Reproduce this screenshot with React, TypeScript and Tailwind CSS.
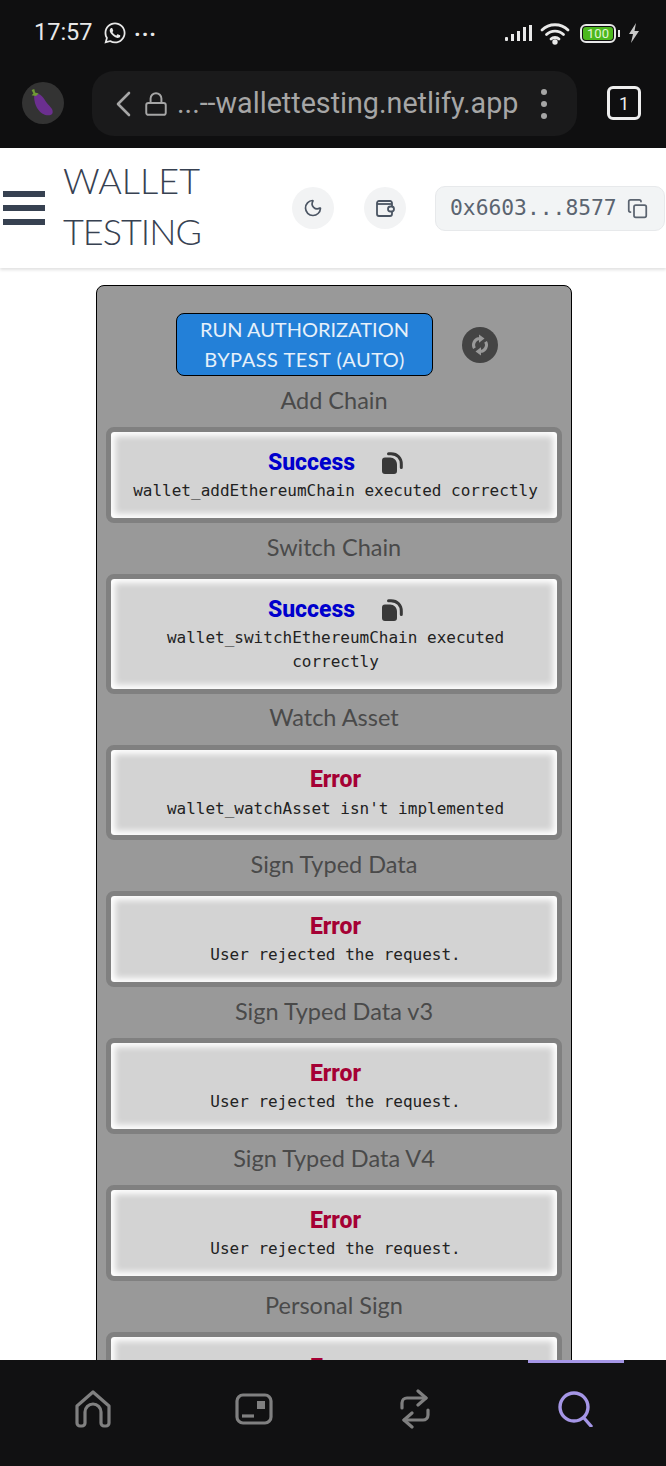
import { Copy, Lock, Moon } from "lucide-react";
import { FaWhatsapp } from "react-icons/fa";

const results = [
  { label: "Add Chain", title: "Success", message: "wallet_addEthereumChain executed correctly" },
  { label: "Switch Chain", title: "Success", message: "wallet_switchEthereumChain executed correctly" },
  { label: "Watch Asset", title: "Error", message: "wallet_watchAsset isn't implemented" },
  { label: "Sign Typed Data", title: "Error", message: "User rejected the request." },
  { label: "Sign Typed Data v3", title: "Error", message: "User rejected the request." },
  { label: "Sign Typed Data V4", title: "Error", message: "User rejected the request." },
  { label: "Personal Sign", title: "Error", message: "User rejected the request." },
];

function CopyFilled() {
  return (
    <svg viewBox="0 0 22 22" className="w-[22px] h-[22px] text-[#383838]" fill="none">
      <path
        d="M1 8.500a3 3 0 0 1 3-3h5c4 0 7 3 7 7v6.500a3 3 0 0 1-3 3H4a3 3 0 0 1-3-3z"
        fill="currentColor"
      />
      <path d="M7.500 1.700H10c6.500 0 10.300 4.500 10.300 10.300v3.500" stroke="currentColor" strokeWidth="3" strokeLinecap="round" />
    </svg>
  );
}

function RefreshIcon() {
  return (
    <svg viewBox="0 0 24 24" className="w-[24px] h-[24px] text-[#999999]" fill="currentColor">
      <path d="M6.400 15.300A6.500 6.500 0 0 1 11 5.600" fill="none" stroke="currentColor" strokeWidth="3" />
      <path d="M11 1.500 16.500 5.600 11 9.800z" />
      <path d="M17.600 8.700A6.500 6.500 0 0 1 13 18.400" fill="none" stroke="currentColor" strokeWidth="3" />
      <path d="M13 22.500 7.500 18.400 13 14.200z" />
    </svg>
  );
}

function StatusBar() {
  return (
    <div className="h-[64px] flex flex-row items-center justify-between pl-[34px] pr-[26px] pt-[2px]">
      <div className="flex flex-row items-center text-[#e8e8e8]">
        <span className="font-['Roboto',sans-serif] text-[23.5px]">17:57</span>
        <FaWhatsapp className="w-[24px] h-[24px] ml-[10px]" />
        <span className="ml-[8px] text-[20px] font-bold leading-none pb-[8px] tracking-[2px]">...</span>
      </div>
      <div className="flex flex-row items-center">
        <svg viewBox="0 0 28 18" className="w-[28px] h-[18px]" fill="#e8e8e8">
          <rect x="0" y="13" width="3" height="4" rx="1" />
          <rect x="6" y="10" width="3" height="7" />
          <rect x="12" y="7" width="3" height="10" />
          <rect x="18" y="3" width="3" height="14" />
          <rect x="24" y="1" width="3" height="16" />
        </svg>
        <svg viewBox="0 0 30 24" className="w-[30px] h-[24px] ml-[7px]" fill="none" stroke="#e8e8e8" strokeWidth="2.8" strokeLinecap="round">
          <path d="M2 9c7-7 19-7 26 0" />
          <path d="M6.500 13.500c4.500-4.500 12.500-4.500 17 0" />
          <path d="M11 18c2-2 6-2 8 0" />
          <circle cx="15" cy="21" r="1.300" fill="#e8e8e8" />
        </svg>
        <div className="flex flex-row items-center ml-[10px]">
          <div className="w-[36px] h-[19px] rounded-[6px] border-2 border-[#e8e8e8] p-[1px]">
            <div className="h-full rounded-[3px] bg-[#4cb81e] flex items-center justify-center text-[13px] leading-none text-[#e0f5d6] font-['Roboto',sans-serif]">
              100
            </div>
          </div>
          <div className="w-[2px] h-[7px] ml-[2px] bg-[#e8e8e8]" />
        </div>
        <svg viewBox="0 0 12 20" className="w-[12px] h-[20px] ml-[8px]" fill="#c8c8c8">
          <path d="M8 0 1 11h4l-2 9 8-12H6.500z" />
        </svg>
      </div>
    </div>
  );
}

function BrowserBar() {
  return (
    <div className="h-[84px] flex flex-row items-start pl-[22px] pt-[7px]">
      <div className="w-[42px] h-[42px] mt-[11px] rounded-full bg-[#333333] flex items-center justify-center shrink-0">
        <svg viewBox="0 0 32 36" className="w-[28px] h-[32px]">
          <path d="M6 8c5-2 9 1 13 8 3 5 9 8 8 13-1 4-7 4-12 1C9 26 5 17 6 8z" fill="#6b2f8f" />
          <path d="M3 3l2 4-2 2 5 1 3-3-4-1-1-4z" fill="#6f9a34" />
        </svg>
      </div>
      <div className="ml-[28px] w-[485px] h-[65px] rounded-[22px] bg-[#1a1a1b] flex flex-row items-center text-[#a6a6a6] pl-[23px]">
        <svg viewBox="0 0 16 26" className="w-[16px] h-[26px]" fill="none" stroke="currentColor" strokeWidth="2.6" strokeLinecap="round" strokeLinejoin="round">
          <path d="M14 2 3 13l11 11" />
        </svg>
        <Lock className="w-[26px] h-[26px] ml-[12px]" strokeWidth={1.8} />
        <span className="ml-[8px] font-['Roboto',sans-serif] text-[28.7px] whitespace-nowrap">...--wallettesting.netlify.app</span>
        <svg viewBox="0 0 8 32" className="w-[8px] h-[32px] ml-[22px]" fill="currentColor">
          <circle cx="4" cy="4" r="3" />
          <circle cx="4" cy="16" r="3" />
          <circle cx="4" cy="28" r="3" />
        </svg>
      </div>
      <div className="ml-[30px] mt-[15px] w-[34px] h-[34px] rounded-[6px] border-[3px] border-[#eeeeee] flex items-center justify-center text-[#eeeeee] text-[18px] font-['Roboto',sans-serif]">
        1
      </div>
    </div>
  );
}

function Header() {
  return (
    <header className="h-[120px] shrink-0 flex flex-row items-center bg-white shadow-[0_2px_3px_rgba(0,0,0,0.12)] relative pl-[3px]">
      <div className="flex flex-col gap-[8px] w-[42px]">
        <div className="h-[6px] bg-[#374151]" />
        <div className="h-[6px] bg-[#374151]" />
        <div className="h-[6px] bg-[#374151]" />
      </div>
      <div className="ml-[18px] w-[190px] pb-[4px] font-['Lato',sans-serif] font-light text-[36px] leading-[51px] text-[#374151]">
        WALLET
        <br />
        <span className="tracking-[-1px]">TESTING</span>
      </div>
      <div className="ml-[39px] w-[42px] h-[42px] rounded-full bg-[#f2f3f4] flex items-center justify-center text-[#4b5563]">
        <Moon className="w-[20px] h-[20px]" />
      </div>
      <div className="ml-[30px] w-[42px] h-[42px] rounded-full bg-[#f2f3f4] flex items-center justify-center text-[#4b5563]">
        <svg viewBox="0 0 20 20" className="w-[20px] h-[20px]" fill="none" stroke="currentColor" strokeWidth="1.800">
          <path d="M17 8V5a2 2 0 0 0-2-2H4a2 2 0 0 0-2 2v11a2 2 0 0 0 2 2h11a2 2 0 0 0 2-2v-2" />
          <path d="M2 6h15" />
          <rect x="13" y="8.500" width="6" height="5" rx="2.500" />
        </svg>
      </div>
      <div className="ml-[29px] h-[45px] w-[230px] shrink-0 rounded-[10px] bg-[#f2f4f5] border border-[#e7e9eb] flex flex-row items-center pl-[14px] text-[#5b6470]">
        <span className="font-['DejaVu_Sans_Mono',monospace] text-[21.3px]">0x6603...8577</span>
        <Copy className="w-[21px] h-[21px] ml-[10px]" />
      </div>
    </header>
  );
}

function ResultBox({ title, message }: { title: string; message: string }) {
  const success = title === "Success";
  return (
    <div className="rounded-[8px] border-[5px] border-[#808080] bg-[#d3d3d3] shadow-[inset_0_0_6px_4px_#ffffff] pt-[15px] pb-[14.8px] pl-[4px] pr-[1px] flex flex-col items-center">
      <div className="h-[32px] flex flex-row items-center gap-[26px]">
        <span className={`font-['Roboto',sans-serif] font-extrabold text-[23px] ${success ? "text-[#0000cd]" : "text-[#a50034]"}`}>
          {title}
        </span>
        {success && <CopyFilled />}
      </div>
      <p className="font-['DejaVu_Sans_Mono',monospace] text-[16px] leading-[24px] text-[#222222] text-center max-w-[420px]">
        {message}
      </p>
    </div>
  );
}

function BottomNav() {
  return (
    <nav className="h-[106px] shrink-0 bg-[#111112] grid grid-cols-4 pl-[12px] pr-[10px]">
      <div className="flex items-center justify-center pb-[8px]">
        <svg viewBox="0 0 36 38" className="w-[36px] h-[38px]" fill="none" stroke="#808080" strokeWidth="3.2" strokeLinejoin="round">
          <path d="M2 16 18 2l16 14v17a3 3 0 0 1-3 3h-2a3 3 0 0 1-3-3V22a8 8 0 0 0-16 0v11a3 3 0 0 1-3 3H5a3 3 0 0 1-3-3z" />
        </svg>
      </div>
      <div className="flex items-center justify-center pb-[8px]">
        <svg viewBox="0 0 38 32" className="w-[38px] h-[32px]" fill="none" stroke="#808080" strokeWidth="3.2">
          <rect x="2" y="2" width="34" height="28" rx="6" />
          <rect x="22" y="8" width="8" height="8" fill="#808080" stroke="none" />
          <path d="M7 23h12" />
        </svg>
      </div>
      <div className="flex items-center justify-center pb-[8px] text-[#808080]">
        <svg viewBox="0 0 32 40" className="w-[32px] h-[40px]" fill="none" stroke="currentColor" strokeWidth="3.2" strokeLinecap="round" strokeLinejoin="round">
          <path d="m19 2 8 7-8 7" />
          <path d="M27 9H8a5 5 0 0 0-5 5v5" />
          <path d="m13 38-8-7 8-7" />
          <path d="M5 31h19a5 5 0 0 0 5-5v-5" />
        </svg>
      </div>
      <div className="relative flex items-center justify-center pb-[8px]">
        <div className="absolute top-0 left-1/2 -translate-x-1/2 w-[96px] h-[3px] bg-[#a596e6]" />
        <svg viewBox="0 0 36 36" className="w-[36px] h-[36px]" fill="none" stroke="#a596e6" strokeWidth="3.4" strokeLinecap="round">
          <circle cx="16" cy="16" r="14" />
          <path d="m26 27 7 8" />
        </svg>
      </div>
    </nav>
  );
}

export default function App() {
  return (
    <div className="w-[666px] h-[1466px] flex flex-col overflow-hidden bg-white">
      <div className="h-[148px] shrink-0 bg-[#0f0f10]">
        <StatusBar />
        <BrowserBar />
      </div>
      <Header />
      <main className="flex-1 min-h-0 overflow-hidden pt-[17px] pl-[96px]">
        <section className="w-[476px] rounded-t-[8px] border border-black bg-[#999999] px-[9px] pt-[27px] pb-[20px] font-['Lato',sans-serif]">
          <div className="flex flex-row items-center justify-center gap-[29px] pl-[6px]">
            <button className="w-[257px] h-[63px] rounded-[8px] border border-black bg-[#2380d8] text-[#e6f0fa] text-[20px] leading-[30px] pb-[9px]">
              RUN AUTHORIZATION
              <br />
              <span className="tracking-[0.5px]">BYPASS TEST (AUTO)</span>
            </button>
            <div className="w-[36px] h-[36px] rounded-full bg-[#444444] flex items-center justify-center">
              <RefreshIcon />
            </div>
          </div>
          {results.map((r) => (
            <div key={r.label}>
              <div className="h-[51px] flex items-center justify-center pb-[2px] text-[23.5px] text-[#4a4a4a]">{r.label}</div>
              <ResultBox title={r.title} message={r.message} />
            </div>
          ))}
        </section>
      </main>
      <BottomNav />
    </div>
  );
}
